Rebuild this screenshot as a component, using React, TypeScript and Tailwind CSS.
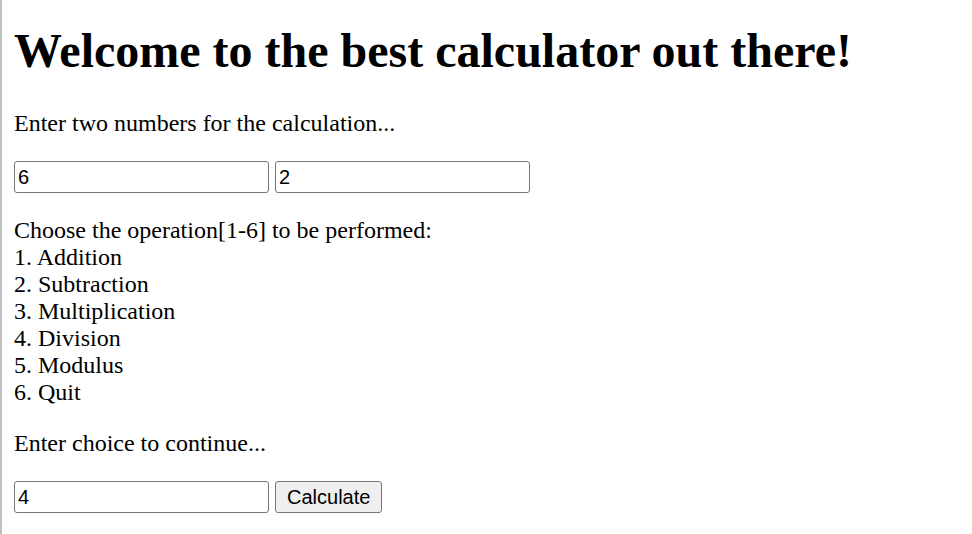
import React, { useState } from "react"

const ops = ["1. Addition", "2. Subtraction", "3. Multiplication", "4. Division", "5. Modulus", "6. Quit"]

const inputCls =
  "w-[255px] h-[32px] border border-[#767676] rounded-[3px] px-[3px] text-[20px] font-['Liberation_Sans',Arial,sans-serif] text-black bg-white align-middle"

const App = () => {
  const [a, setA] = useState("6")
  const [b, setB] = useState("2")
  const [choice, setChoice] = useState("4")

  return (
    <div className="min-h-screen bg-white border-l-2 border-[#c0c0c0] px-3 py-[1px] text-black font-['Liberation_Serif','Times_New_Roman',serif] text-[24px] leading-[27px]">
      <h1 className="text-[48px] font-bold leading-[55px] mt-[22px] mb-[32px]">Welcome to the best calculator out there!</h1>
      <p className="my-6">Enter two numbers for the calculation...</p>
      <div className="my-6 flex gap-[6px] h-[32px]">
        <input className={inputCls} value={a} onChange={(e) => setA(e.target.value)} />
        <input className={inputCls} value={b} onChange={(e) => setB(e.target.value)} />
      </div>
      <p className="my-6">
        Choose the operation[1-6] to be performed:
        {ops.map((o) => (
          <span key={o} className="block">
            {o}
          </span>
        ))}
      </p>
      <p className="my-6">Enter choice to continue...</p>
      <div className="my-6 flex gap-[6px] h-[32px]">
        <input className={inputCls} value={choice} onChange={(e) => setChoice(e.target.value)} />
        <button className="h-[32px] px-[11px] border border-[#767676] rounded-[3px] bg-[#efefef] text-[20px] font-['Liberation_Sans',Arial,sans-serif] text-black">
          Calculate
        </button>
      </div>
    </div>
  )
}

export default App
